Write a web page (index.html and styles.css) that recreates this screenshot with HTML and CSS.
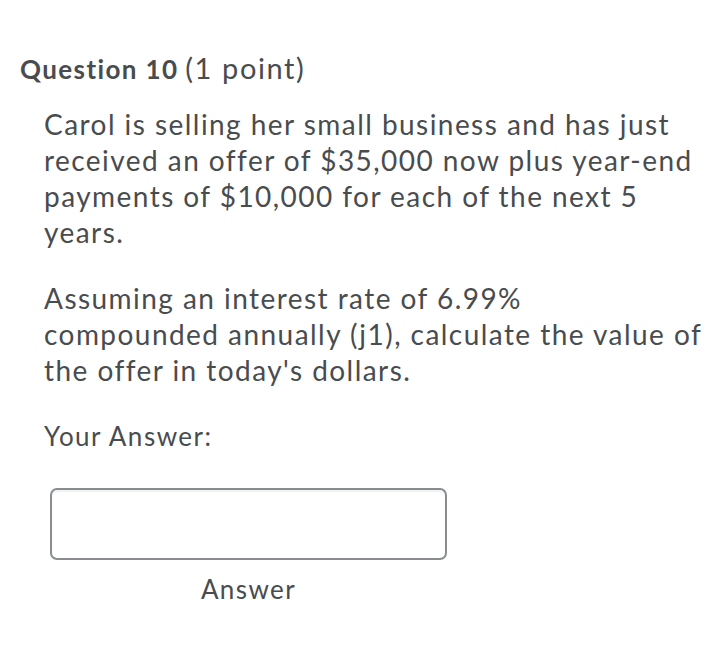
FILE: index.html
```html
<!DOCTYPE html>
<html>
<head>
<meta charset="utf-8">
<link rel="stylesheet" href="styles.css">
</head>
<body>
<div class="question">
  <h2 class="q-title"><span class="q-num">Question 10</span> <span class="q-pts">(1 point)</span></h2>
  <div class="q-body">
    <p class="para">Carol is selling her small business and has just received an offer of $35,000 now plus year-end payments of $10,000 for each of the next 5 years.</p>
    <p class="para">Assuming an interest rate of 6.99%<br>compounded annually (j1), calculate the value of the offer in today's dollars.</p>
    <p class="label">Your Answer:</p>
    <div class="answer">
      <input class="answer-input" type="text" aria-label="Answer">
      <div class="answer-caption">Answer</div>
    </div>
  </div>
</div>
</body>
</html>
```
FILE: styles.css
```css
html, body {
  margin: 0;
  padding: 0;
  background: #ffffff;
}
body {
  font-family: Lato, "Open Sans", sans-serif;
  color: #494c4e;
}
.question {
  padding: 50px 0 0 20px;
}
.q-title {
  margin: 0;
  font-size: 26px;
  line-height: 36px;
  font-weight: 400;
}
.q-num {
  font-weight: 700;
  letter-spacing: 1.4px;
}
.q-pts {
  font-size: 29px;
  letter-spacing: 1.6px;
}
.q-body {
  padding-left: 24px;
  margin-top: 19px;
}
.para {
  margin: 0 0 30px 0;
  font-size: 28px;
  line-height: 36px;
  letter-spacing: 1.45px;
}
.label {
  margin: 4px 0 0 0;
  font-size: 26px;
  line-height: 36px;
  letter-spacing: 1.5px;
}
.answer {
  width: 397px;
  margin-top: 34px;
  margin-left: 6px;
}
.answer-input {
  display: block;
  box-sizing: border-box;
  width: 397px;
  height: 72px;
  border: 2px solid #8a8d90;
  border-radius: 7px;
  box-shadow: inset 0 2px 2px rgba(0,0,0,0.06);
  background: #fff;
  margin: 0;
  padding: 0 12px;
  outline: none;
}
.answer-caption {
  text-align: center;
  font-size: 26px;
  line-height: 36px;
  letter-spacing: 1.4px;
  margin-top: 11px;
}
```
